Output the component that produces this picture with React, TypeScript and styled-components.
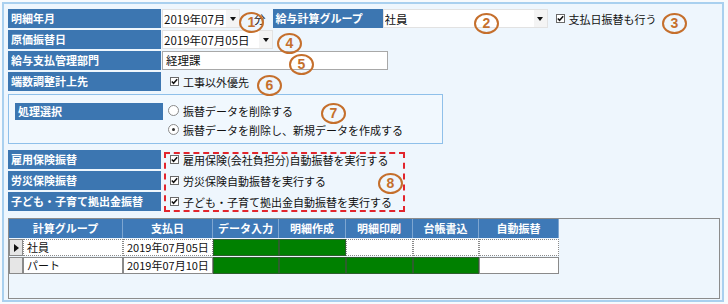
import React from 'react';
import styled, { createGlobalStyle } from 'styled-components';

const Global = createGlobalStyle`
  html, body { margin: 0; padding: 0; background: #f7fafd; }
  body { font-family: "Noto Sans CJK JP", "Noto Sans", sans-serif; font-size: 11px; color: #111; }
  #root { width: 728px; height: 304px; overflow: hidden; }
`;

const Frame = styled.div`
  position: relative;
  box-sizing: border-box;
  margin: 2px 0 0 2px;
  width: 722px;
  height: 300px;
  border: 2px solid #a9d0ef;
  background: #eef6fd;
  padding: 5px 4px 0 4px;
  display: flex;
  flex-direction: column;
`;

const Rows = styled.div`
  display: flex;
  flex-direction: column;
  gap: 2px;
`;

const Row = styled.div`
  display: flex;
  align-items: center;
  height: 19px;
`;

const Label = styled.div<{ $w?: number; $h?: number; $ml?: number }>`
  box-sizing: border-box;
  width: ${(p) => p.$w ?? 153}px;
  height: ${(p) => p.$h ?? 19}px;
  line-height: ${(p) => p.$h ?? 19}px;
  margin-left: ${(p) => p.$ml ?? 0}px;
  background: #3c76b1;
  color: #fff;
  font-weight: bold;
  font-size: 11px;
  padding-left: 3px;
  white-space: nowrap;
  flex-shrink: 0;
`;

const Select = styled.div<{ $w: number; $ml?: number }>`
  box-sizing: border-box;
  width: ${(p) => p.$w}px;
  height: 19px;
  margin-left: ${(p) => p.$ml ?? 1}px;
  background: #fff;
  border: 1px solid #e2e2e2;
  display: flex;
  align-items: center;
  padding-left: 1px;
  font-size: 11.5px;
  white-space: nowrap;
`;

const SelectText = styled.span`
  flex: 1;
  overflow: hidden;
`;

const ArrowBtn = styled.span`
  width: 13px;
  height: 17px;
  display: flex;
  align-items: center;
  justify-content: center;
  background: #f4f4f4;
  &::after {
    content: '';
    border-left: 3.5px solid transparent;
    border-right: 3.5px solid transparent;
    border-top: 4px solid #111;
  }
`;

const TextInput = styled.div<{ $w: number }>`
  box-sizing: border-box;
  width: ${(p) => p.$w}px;
  height: 19px;
  margin-left: 1px;
  background: #fff;
  border: 1px solid #a8a8a8;
  padding-left: 3px;
  line-height: 17px;
  font-size: 11.5px;
`;

const Plain = styled.span<{ $ml?: number }>`
  margin-left: ${(p) => p.$ml ?? 0}px;
  font-size: 11.5px;
  white-space: nowrap;
`;

const CheckWrap = styled.label<{ $ml?: number }>`
  display: flex;
  align-items: center;
  gap: 4px;
  margin-left: ${(p) => p.$ml ?? 8}px;
  font-size: 11px;
  white-space: nowrap;
`;

const Box = styled.span`
  box-sizing: border-box;
  width: 9px;
  height: 9px;
  border: 1px solid #6a6a6a;
  background: #fff;
  display: flex;
  align-items: center;
  justify-content: center;
`;

const Check = () => (
  <Box>
    <svg width="7" height="7" viewBox="0 0 7 7">
      <path d="M0.8 3.4 L2.6 5.3 L6.2 1.2" fill="none" stroke="#111" strokeWidth="1.5" />
    </svg>
  </Box>
);

const RadioDot = styled.span<{ $on?: boolean }>`
  box-sizing: border-box;
  width: 11px;
  height: 11px;
  border-radius: 50%;
  border: 1px solid #8a8a8a;
  background: #fff;
  display: flex;
  align-items: center;
  justify-content: center;
  &::after {
    content: '';
    width: 3px;
    height: 3px;
    border-radius: 50%;
    background: ${(p) => (p.$on ? '#333' : 'transparent')};
  }
`;

const Panel = styled.div`
  box-sizing: border-box;
  margin-top: 3px;
  width: 435px;
  height: 50px;
  border: 1px solid #8fc0ea;
  background: #f1f8fe;
  display: flex;
  padding: 8px 0 0 6px;
`;

const RadioCol = styled.div`
  display: flex;
  flex-direction: column;
  margin-left: 5px;
  margin-top: -2px;
`;

const RadioRow = styled.label`
  display: flex;
  align-items: center;
  gap: 4px;
  height: 19px;
  font-size: 11px;
  white-space: nowrap;
`;

const CheckSection = styled.div`
  position: relative;
  margin-top: 6px;
`;

const DashedBox = styled.div`
  position: absolute;
  left: 156px;
  top: 2px;
  width: 241px;
  height: 60px;
  box-sizing: border-box;
  border: 2px dashed #e2252d;
  pointer-events: none;
`;

const Grid = styled.div`
  box-sizing: border-box;
  margin-top: 7px;
  width: 712px;
  height: 81px;
  border: 1px solid #8c8c8c;
  background: #eef6fd;
`;

const GridTable = styled.div`
  display: grid;
  grid-template-columns: 14px 100px 90px 66px 67px 67px 66px 80px;
  width: 550px;
`;

const HeadCell = styled.div<{ $span?: number }>`
  grid-column: span ${(p) => p.$span ?? 1};
  height: 19px;
  line-height: 19px;
  background: #3e79b7;
  color: #fff;
  font-weight: bold;
  font-size: 11px;
  text-align: center;
  border-right: 1px solid #7ea6d1;
  box-sizing: border-box;
  margin-bottom: 1px;
  &:last-of-type { border-right: none; }
`;

const Cell = styled.div<{ $green?: boolean; $sel?: boolean; $gray?: boolean }>`
  box-sizing: border-box;
  height: 17px;
  line-height: 15px;
  font-size: 11px;
  padding-left: 3px;
  white-space: nowrap;
  overflow: hidden;
  background: ${(p) => (p.$green ? '#008000' : p.$gray ? '#e6e6e6' : '#fff')};
  border: 1px ${(p) => (p.$sel ? 'dotted' : 'solid')} ${(p) => (p.$green ? '#2d5e2d' : '#8a8a8a')};
  margin-bottom: 1px;
  display: flex;
  align-items: center;
`;

const RowArrow = styled.span`
  border-top: 4px solid transparent;
  border-bottom: 4px solid transparent;
  border-left: 5px solid #111;
  margin-left: 1px;
`;

const Mark = styled.div<{ $x: number; $y: number }>`
  position: absolute;
  box-sizing: border-box;
  left: ${(p) => p.$x - 14}px;
  top: ${(p) => p.$y - 12}px;
  width: 25px;
  height: 21px;
  border: 2px solid #c56f2c;
  border-radius: 50%;
  color: #c56f2c;
  font-family: "Liberation Sans", Arial, sans-serif;
  font-weight: bold;
  font-size: 14px;
  line-height: 17px;
  text-align: center;
  pointer-events: none;
`;

const marks = [
  { n: 1, x: 249, y: 20 },
  { n: 2, x: 484, y: 21 },
  { n: 3, x: 672, y: 21 },
  { n: 4, x: 287, y: 41 },
  { n: 5, x: 299, y: 62 },
  { n: 6, x: 267, y: 83 },
  { n: 7, x: 331, y: 111 },
  { n: 8, x: 388, y: 181 },
];

const gridRows = [
  { group: '社員', date: '2019年07月05日', done: [true, true, false, false, false], current: true },
  { group: 'パート', date: '2019年07月10日', done: [true, true, true, true, false], current: false },
];

export default function App() {
  return (
    <>
      <Global />
      <Frame>
        <Rows>
          <Row>
            <Label>明細年月</Label>
            <Select $w={78}>
              <SelectText>2019年07月</SelectText>
              <ArrowBtn />
            </Select>
            <Plain $ml={14}>分</Plain>
            <Label $w={110} $ml={7}>給与計算グループ</Label>
            <Select $w={165} $ml={0}>
              <SelectText>社員</SelectText>
              <ArrowBtn />
            </Select>
            <CheckWrap $ml={8}>
              <Check />
              支払日振替も行う
            </CheckWrap>
          </Row>
          <Row>
            <Label>原価振替日</Label>
            <Select $w={111}>
              <SelectText>2019年07月05日</SelectText>
              <ArrowBtn />
            </Select>
          </Row>
          <Row>
            <Label>給与支払管理部門</Label>
            <TextInput $w={226}>経理課</TextInput>
          </Row>
          <Row>
            <Label>端数調整計上先</Label>
            <CheckWrap $ml={9}>
              <Check />
              工事以外優先
            </CheckWrap>
          </Row>
        </Rows>

        <Panel>
          <Label $w={148} $h={17}>処理選択</Label>
          <RadioCol>
            <RadioRow>
              <RadioDot />
              振替データを削除する
            </RadioRow>
            <RadioRow>
              <RadioDot $on />
              振替データを削除し、新規データを作成する
            </RadioRow>
          </RadioCol>
        </Panel>

        <CheckSection>
          <Rows>
            <Row>
              <Label>雇用保険振替</Label>
              <CheckWrap $ml={9}>
                <Check />
                雇用保険(会社負担分)自動振替を実行する
              </CheckWrap>
            </Row>
            <Row>
              <Label>労災保険振替</Label>
              <CheckWrap $ml={9}>
                <Check />
                労災保険自動振替を実行する
              </CheckWrap>
            </Row>
            <Row>
              <Label>子ども・子育て拠出金振替</Label>
              <CheckWrap $ml={9}>
                <Check />
                子ども・子育て拠出金自動振替を実行する
              </CheckWrap>
            </Row>
          </Rows>
          <DashedBox />
        </CheckSection>

        <Grid>
          <GridTable>
            <HeadCell $span={2}>計算グループ</HeadCell>
            <HeadCell>支払日</HeadCell>
            <HeadCell>データ入力</HeadCell>
            <HeadCell>明細作成</HeadCell>
            <HeadCell>明細印刷</HeadCell>
            <HeadCell>台帳書込</HeadCell>
            <HeadCell>自動振替</HeadCell>
            {gridRows.map((r) => (
              <React.Fragment key={r.group}>
                <Cell $gray>{r.current && <RowArrow />}</Cell>
                <Cell $sel={r.current}>{r.group}</Cell>
                <Cell $sel={r.current}>{r.date}</Cell>
                {r.done.map((d, i) => (
                  <Cell key={i} $green={d} $sel={r.current && !d} />
                ))}
              </React.Fragment>
            ))}
          </GridTable>
        </Grid>

        {marks.map((m) => (
          <Mark key={m.n} $x={m.x} $y={m.y}>
            {m.n}
          </Mark>
        ))}
      </Frame>
    </>
  );
}
